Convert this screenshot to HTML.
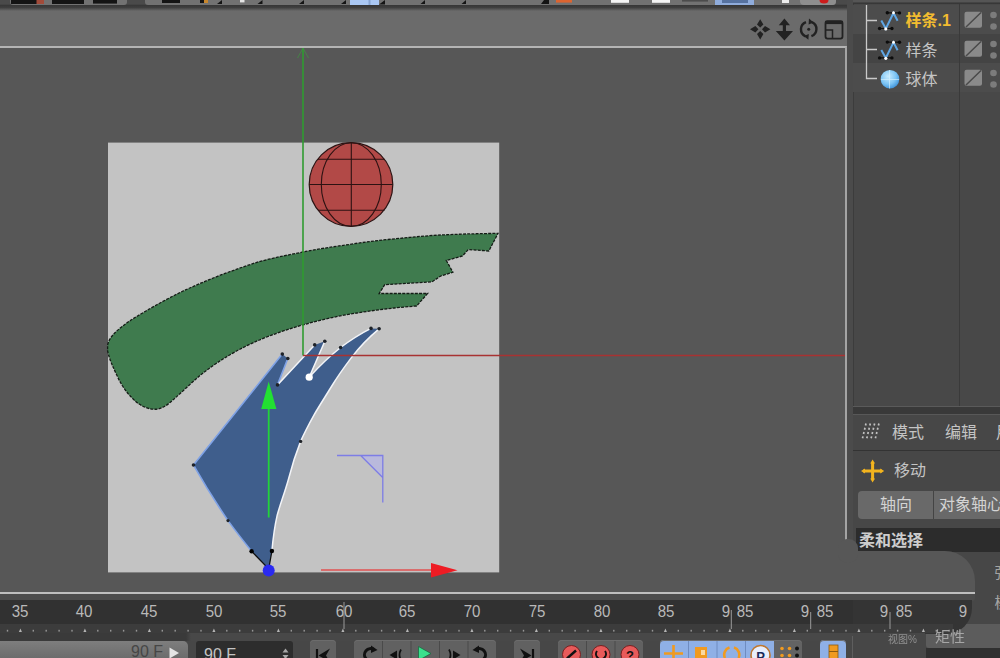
<!DOCTYPE html>
<html><head><meta charset="utf-8">
<style>
html,body{margin:0;padding:0;}
body{width:1000px;height:658px;overflow:hidden;position:relative;background:#474747;font-family:"Liberation Sans","Noto Sans CJK SC",sans-serif;}
.abs{position:absolute;}
#topstrip{left:0;top:0;width:1000px;height:11px;background:linear-gradient(#4a4a4a 0,#4a4a4a 4px,#383838 5.5px,#3f3f3f 7.5px,#585858 9.5px,#6b6b6b 11px);}
#vphead{left:0;top:11px;width:847px;height:35px;background:#6b6b6b;}
#vp{left:0;top:46px;width:845px;height:544px;background:#575757;border-top:2px solid #b4b4b4;border-right:2px solid #a4a4a4;border-bottom:2px solid #bebebe;box-sizing:content-box;}
#gutter{left:847px;top:0;width:6px;height:640px;background:#4b4b4b;}
#om{left:853px;top:4px;width:147px;height:403px;background:#484848;box-shadow:inset 1px 0 0 #3c3c3c;}
.row{position:absolute;left:0;width:147px;height:29px;}
.cn{position:absolute;font-size:16px;line-height:20px;color:#c4c4c4;white-space:nowrap;}
#gap{left:853px;top:407px;width:147px;height:8px;background:#393939;}
#am{left:853px;top:415px;width:147px;height:243px;background:#474747;}
.tl{position:absolute;top:602px;font-size:16px;line-height:20px;color:#b9b9b9;transform:translateX(-50%) scaleX(.94);white-space:nowrap;}
.btn{position:absolute;top:640px;height:20px;background:#616161;box-shadow:inset 0 1px 0 #6c6c6c;border-radius:4px 4px 0 0;}
</style></head><body>

<div id="topstrip" class="abs"></div>
<div id="vphead" class="abs"></div>
<div id="gutter" class="abs"></div>
<div id="vp" class="abs"></div>

<svg class="abs" style="left:0;top:0" width="1000" height="658" viewBox="0 0 1000 658">
  <!-- reference panel -->
  <rect x="108" y="142.6" width="391.2" height="429.8" fill="#c3c3c3"/>
  <!-- sphere -->
  <circle cx="351" cy="184.5" r="41.8" fill="#b24947" stroke="#2c1212" stroke-width="1.2"/>
  <g stroke="#2c1212" stroke-width="1.1" fill="none">
    <line x1="351.3" y1="142.7" x2="351.3" y2="226.3"/>
    <line x1="309.2" y1="184.5" x2="392.8" y2="184.5"/>
    <line x1="318" y1="159.3" x2="384.5" y2="159.3"/>
    <line x1="318" y1="210.3" x2="384.5" y2="210.3"/>
    <ellipse cx="351.3" cy="184.5" rx="30" ry="41.8"/>
  </g>
  <!-- green stroke -->
  <path d="M107.6 345 C109 339 112 336 115.2 332.5 C124 324 134 318 145.6 311.2 C157 304.5 170 297.5 182.1 291.5 C195 285.5 208 280 221.7 274.7 C235 269.8 248 265 261.2 261.1 C275 257.5 288 255 302 252.2 C318 249 334 246.6 350 244.4 C363 242.3 375 240.8 388 239.5 C403 238 417 236.6 432 235.5 C454 234.2 476 233.6 498 233.4 L488.8 251 L468.3 249.5 L462.4 256 L446.3 260.5 L452.9 272.2 L440.8 276 L432 281.8 L384.7 284.7 L379.2 293.5 L427.6 293.5 L416.6 306 C396 307.5 375 310 355 313.3 C337 316 319 320.5 302.3 325 C291 328.2 280 332 270.3 335.6 C258 340.3 247 345.3 236.9 350.8 C223 358.5 211 366.5 200.4 375.1 C190 384 180 394 170 402.5 C164 407.5 159 409.6 153.2 409.2 C146 408.5 139 405 133.5 399.4 C126 392 121.5 385 118.2 378.1 C113.5 368 109.5 360 107.6 350.8 Z" fill="#3f7b4e" stroke="#141c16" stroke-width="1.3" stroke-dasharray="3 1.2"/>
  <!-- blue shape -->
  <path id="bl" d="M268.7 569 L251.8 551.4 Q238.5 535 228 520.6 Q210 494 193.4 464.8 L282.3 354.1 L287.8 358.5 L277.5 384.9 L314.7 344.9 L324.8 341.3 L309.2 377.2 Q325 360 340.6 347.5 Q356 336 371 328.4 L379.1 328.8 C368 338 359 347.5 351.6 357.4 C344 367.5 337.5 376.5 331.8 386 C325 397 319.5 405.5 314.2 414.6 C309 424 304.5 432.5 300.6 441.4 C296 453 292 465.5 288.6 478.8 C285 492 280.5 503 277.2 515.2 C274.5 527 273 539 271.9 551 Q270.3 560 268.7 569 Z" fill="#3f5e8c"/>
  <path d="M193.5 465 L282.3 354.1 M287.8 358.5 L277.5 384.9 M193.4 464.8 Q210 494 228 520.6 Q238.5 535 251.8 551.4" stroke="#7fa2e6" stroke-width="1.6" fill="none"/>
  <path d="M277.5 384.9 L314.7 344.9 M324.8 341.3 L309.2 377.2 Q325 360 340.6 347.5 Q356 336 371 328.4 M379.1 328.8 C368 338 359 347.5 351.6 357.4 C344 367.5 337.5 376.5 331.8 386 C325 397 319.5 405.5 314.2 414.6 C309 424 304.5 432.5 300.6 441.4 C296 453 292 465.5 288.6 478.8 C285 492 280.5 503 277.2 515.2 C274.5 527 273 539 271.9 551" stroke="#f2f4f8" stroke-width="1.5" fill="none"/>
  <path d="M251.6 551.3 L268.7 569 L271.9 551" stroke="#111" stroke-width="1.3" fill="none"/>
  <g fill="#1e2228">
    <circle cx="282.3" cy="354.1" r="1.8"/><circle cx="287.8" cy="358.5" r="1.8"/><circle cx="277.5" cy="384.9" r="1.8"/>
    <circle cx="314.7" cy="344.9" r="1.8"/><circle cx="324.8" cy="341.3" r="1.8"/><circle cx="340.6" cy="347.5" r="1.8"/>
    <circle cx="371" cy="328.4" r="1.8"/><circle cx="379.1" cy="328.8" r="1.8"/><circle cx="300.6" cy="441.4" r="1.7"/>
    <circle cx="193.5" cy="465" r="1.8"/><circle cx="228" cy="520.6" r="1.6"/>
    <circle cx="251.6" cy="551.3" r="2.2" fill="#000"/><circle cx="271.9" cy="551" r="2.2" fill="#000"/>
  </g>
  <circle cx="309.2" cy="377.2" r="3.6" fill="#fff"/>
  <!-- world axes -->
  <line x1="303" y1="48" x2="303" y2="355.5" stroke="#2f9b30" stroke-width="1.6"/>
  <path d="M297.5 58 L303 48 L308.5 58" stroke="#3f9440" stroke-width="1" fill="none" opacity=".7"/>
  <line x1="303" y1="355.5" x2="845" y2="355.5" stroke="#a83232" stroke-width="1.4"/>
  <!-- object axes -->
  <line x1="268.7" y1="405" x2="268.7" y2="517.5" stroke="#22d43a" stroke-width="1.8"/>
  <path d="M268.7 381.6 L276.4 409 L261.2 409 Z" fill="#22e032"/>
  <line x1="321" y1="570" x2="432" y2="570" stroke="#e05050" stroke-width="1.6"/>
  <path d="M457.5 570.3 L431 563 L431 577.5 Z" fill="#ee1c24"/>
  <circle cx="268.7" cy="570.4" r="6" fill="#2a2af0"/>
  <!-- purple corner -->
  <path d="M360.7 455.5 L382.7 455.5 L382.7 477.5 Z" fill="#b9b9dc"/>
  <path d="M337 455.5 L382.8 455.5 L382.8 502.5 M360.7 455.5 L382.7 477.5" stroke="#7d7de6" stroke-width="1.3" fill="none"/>
  <!-- viewport icons -->
  <g fill="#222">
    <path d="M760.2 19.2 L763.4 24.6 L760.2 27.6 L757 24.6 Z M760.2 39.4 L763.4 34 L760.2 31 L757 34 Z M750 29.3 L755.4 26.1 L758.4 29.3 L755.4 32.5 Z M770.4 29.3 L765 26.1 L762 29.3 L765 32.5 Z"/>
    <path d="M784.4 18.5 L790 25.2 L786 25.2 L786 31 L793 31 L784.4 40.5 L775.8 31 L782.8 31 L782.8 25.2 L778.8 25.2 Z"/>
    <circle cx="808.7" cy="29.2" r="1.5"/>
  </g>
  <g stroke="#222" fill="none">
    <path d="M805.5 36.3 A7.6 7.6 0 0 1 806 22.2" stroke-width="2.4"/>
    <path d="M811.9 22.1 A7.6 7.6 0 0 1 811.4 36.2" stroke-width="2.4"/>
    <path d="M809 18.6 L813.6 22.4 L808.6 24.4 Z" fill="#222" stroke="none"/>
    <path d="M808.4 39.8 L803.8 36 L808.8 34 Z" fill="#222" stroke="none"/>
    <rect x="825.5" y="21.2" width="17" height="17.4" rx="2" stroke-width="1.8"/>
    <path d="M825 22.5 L843 22.5" stroke-width="3.2"/>
    <path d="M826 30 L832.5 30 L832.5 38.5" stroke-width="1.5"/>
  </g>
</svg>


<!-- top toolbar remnants -->
<svg class="abs" style="left:0;top:0" width="1000" height="6" viewBox="0 0 1000 6">
  <rect x="10" y="-4" width="117" height="9" rx="3" fill="#727272"/>
  <rect x="145" y="-4" width="691" height="9" rx="3" fill="#727272"/>
  <g fill="#141414">
    <rect x="11" y="0" width="26" height="4"/><rect x="52" y="0" width="32" height="4"/><rect x="93" y="0" width="24" height="3.6"/>
    <rect x="162" y="0" width="18" height="3"/><rect x="200" y="0" width="8" height="3"/>
    <path d="M222 0 V4 H217 Z M262.5 0 V4 H257.5 Z M304 0 V4 H299 Z M346 0 V4 H341 Z M385 0 V4.4 H379 Z M425 0 V4 H420.5 Z M466 0 V4 H461.5 Z M549 0 V4 H541 L544 0 Z M80 0 L84 0 L84 4 Z"/>
  </g>
  <rect x="36.5" y="0" width="7.5" height="4" fill="#a24b3a"/>
  <rect x="204" y="0" width="4" height="3" fill="#c8862c"/>
  <rect x="240" y="0" width="4.5" height="2.4" fill="#e4e4e4"/>
  <rect x="350" y="0" width="29" height="5" fill="#aac8f4"/><rect x="368.5" y="0" width="2" height="5" fill="#86a3d2"/>
  <rect x="556" y="0" width="16" height="2.6" fill="#dc6430"/>
  <rect x="611" y="0" width="18" height="2.8" fill="#f4f4f4"/><rect x="652" y="0" width="18" height="2.8" fill="#f4f4f4"/>
  <rect x="682" y="0" width="26" height="1.6" fill="#4c4c4c"/>
  <rect x="715" y="0" width="39" height="5" fill="#8facdc"/><rect x="722" y="0" width="26" height="3" fill="#5672a0"/>
  <rect x="782" y="0" width="7" height="3" fill="#ececec"/>
  <rect x="800" y="-4" width="36" height="9" rx="4" fill="#8e8e8e"/>
  <path d="M819.5 0 A4.5 3.6 0 0 0 828.5 0 Z" fill="#cc1c1c"/>
</svg>

<!-- object manager -->
<div id="om" class="abs">
  <div class="row" style="top:1px;background:#4c4c4c"></div>
  <div class="row" style="top:30px;background:#444"></div>
  <div class="row" style="top:59px;background:#4c4c4c"></div>
  <div class="abs" style="left:106px;top:0;width:1px;height:403px;background:#3a3a3a"></div>
  <svg class="abs" style="left:0;top:0" width="147" height="100" viewBox="853 4 147 100">
    <path d="M866.5 5 L866.5 78.5 L877 78.5 M866.5 20.5 L877 20.5 M866.5 49.5 L877 49.5" stroke="#c9c9c9" stroke-width="1.3" fill="none"/>
    <g id="spl">
      <path d="M881.3 20.5 L885.8 28.6 L893.5 13 L897.6 20.8" stroke="#5fa6e4" stroke-width="2" fill="none" stroke-linejoin="miter"/>
      <path d="M879.5 28.5 L892 28.5 M887.2 12.8 L899.6 12.8" stroke="#111" stroke-width="1.2"/>
      <g fill="#0c0c0c"><circle cx="879.6" cy="28.5" r="1.7"/><circle cx="891.9" cy="28.5" r="1.7"/><circle cx="887.3" cy="12.7" r="1.7"/><circle cx="899.5" cy="12.9" r="1.7"/></g>
      <circle cx="885.8" cy="28.9" r="1.6" fill="#fff"/><circle cx="893.5" cy="12.8" r="1.5" fill="#fff"/>
    </g>
    <use href="#spl" y="29.4"/>
    <defs><radialGradient id="sg" cx=".4" cy=".35" r=".7"><stop offset="0" stop-color="#c8ecff"/><stop offset=".6" stop-color="#7cc4f4"/><stop offset="1" stop-color="#3a8fd8"/></radialGradient></defs>
    <circle cx="890" cy="79.2" r="9.3" fill="url(#sg)"/>
    <path d="M881 79.5 L899 79.5 M889.5 70 L889.5 88.5" stroke="#d8f2ff" stroke-width=".8" opacity=".8"/>
    <g fill="#8a8a8a">
      <rect x="964.5" y="11.7" width="17.5" height="16" rx="2"/><rect x="964.5" y="40.7" width="17.5" height="16" rx="2"/><rect x="964.5" y="69.7" width="17.5" height="16" rx="2"/>
    </g>
    <g stroke="#4a4a4a" stroke-width="1.5"><path d="M966 27 L981 12.5 M966 56 L981 41.5 M966 85 L981 70.5"/></g>
    <g fill="#7c7c7c"><circle cx="993.5" cy="15" r="3.3"/><circle cx="993.5" cy="26.5" r="3.3"/><circle cx="993.5" cy="44" r="3.3"/><circle cx="993.5" cy="55.5" r="3.3"/><circle cx="993.5" cy="73" r="3.3"/><circle cx="993.5" cy="84.5" r="3.3"/></g>
  </svg>
  <div class="cn" style="left:52.5px;top:7px;color:#f2bc30;font-weight:700">样条.1</div>
  <div class="cn" style="left:52.5px;top:36.5px">样条</div>
  <div class="cn" style="left:52.5px;top:65.5px">球体</div>
</div>
<div class="abs" style="left:853px;top:0;width:147px;height:4px;background:linear-gradient(#555 0,#555 2px,#333 3px,#3c3c3c 4px)"></div>
<div id="gap" class="abs"></div>
<div class="abs" style="left:853px;top:406px;width:147px;height:1px;background:#5a5a5a"></div>
<div class="abs" style="left:853px;top:414px;width:147px;height:1px;background:#585858"></div>

<!-- attribute manager -->
<div id="am" class="abs">
  <div class="abs" style="left:0;top:35px;width:147px;height:1px;background:#333"></div>
  <svg class="abs" style="left:0;top:0" width="147" height="80" viewBox="853 415 147 80">
    <g stroke="#c2c2c2" stroke-width="1.7" stroke-dasharray="2 2.4">
      <path d="M866 423.5 L862 440.5 M870.3 423.5 L866.3 440.5 M874.6 423.5 L870.6 440.5 M878.9 423.5 L874.9 440.5"/>
    </g>
    <g stroke="#f3b41e" stroke-width="3" fill="#f3b41e">
      <path d="M872.6 462 L872.6 480 M863 471 L882 471"/>
      <path d="M872.6 459.5 L875 463.5 L870.2 463.5 Z M872.6 482.5 L875 478.5 L870.2 478.5 Z M861 471 L865 468.6 L865 473.4 Z M884.2 471 L880.2 468.6 L880.2 473.4 Z" stroke="none"/>
    </g>
  </svg>
  <div class="cn" style="left:39px;top:8px">模式</div>
  <div class="cn" style="left:92px;top:8px">编辑</div>
  <div class="cn" style="left:143px;top:8px">用户</div>
  <div class="cn" style="left:41px;top:46px">移动</div>
  <div class="abs" style="left:5px;top:76px;width:75px;height:28px;background:#696969;border-radius:4px 0 0 4px;border-right:1px solid #444"></div>
  <div class="abs" style="left:81px;top:76px;width:70px;height:28px;background:#696969"></div>
  <div class="cn" style="left:27px;top:80px;color:#d4d4d4">轴向</div>
  <div class="cn" style="left:86px;top:80px;color:#d4d4d4">对象轴心</div>
  <div class="abs" style="left:3px;top:113px;width:144px;height:24px;background:#2c2c2c"></div>
  <div class="cn" style="left:6px;top:116px;color:#cdcdcd;font-weight:700">柔和选择</div>
  <div class="cn" style="left:141.5px;top:148px;font-size:15px;color:#a4a4a4">强度</div>
  <div class="cn" style="left:141.5px;top:178px;font-size:15px;color:#a4a4a4">模式</div>
</div>

<!-- bottom strip under viewport -->
<div class="abs" style="left:0;top:594px;width:853px;height:7px;background:#4c4c4c"></div>
<div class="abs" id="tlband" style="left:0;top:600px;width:853px;height:33px;background:#313131"></div>
<div class="abs" style="left:0;top:633px;width:853px;height:8px;background:#484848"></div>
<div class="abs" style="left:0;top:633px;width:191px;height:8px;background:linear-gradient(90deg,#3a3a3a 0,#3a3a3a 186px,#484848 191px)"></div>
<div class="abs" style="left:0;top:641px;width:853px;height:17px;background:#474747"></div>


<!-- cloned patch bottom-right -->
<div class="abs" style="left:926px;top:648px;width:74px;height:10px;background:#303030"></div>
<div class="abs" style="left:926px;top:624px;width:74px;height:24px;background:#5c5c5c;border-radius:3px 0 0 3px"></div>
<div class="abs" style="left:840px;top:551px;width:135px;height:41px;background:#575757;border-radius:6px 30px 0 0"></div>
<div class="abs" style="left:838px;top:539px;width:20px;height:24px;background:#575757;border-radius:9px"></div>
<div class="abs" style="left:845px;top:592px;width:130px;height:2px;background:#bebebe"></div>
<div class="abs" style="left:853px;top:594px;width:122px;height:7px;background:#4c4c4c;border-radius:0 0 3px 0"></div>
<div class="abs" style="left:853px;top:600px;width:119px;height:34px;background:#343434;border-radius:0 0 26px 0"></div>
<div class="abs" style="left:853px;top:624px;width:100px;height:9px;background:#3c3c3c"></div>
<div class="abs" style="left:853px;top:633px;width:72px;height:25px;background:#474747"></div>
<div class="abs" style="left:888px;top:632.5px;font-size:10px;line-height:14px;color:#909090;white-space:nowrap;font-family:'Liberation Sans','Noto Sans CJK SC',sans-serif;filter:blur(.6px)">视图%</div>
<div class="abs" style="left:935px;top:626.5px;font-size:15px;line-height:20px;color:#a6a6a6;white-space:nowrap;font-family:'Liberation Sans','Noto Sans CJK SC',sans-serif;filter:blur(.7px)">矩性</div>

<!-- timeline -->
<div class="abs" style="left:0;top:624px;width:853px;height:9px;background:#3c3c3c"></div>
<div class="tl" style="left:20px">35</div>
<div class="tl" style="left:84px">40</div>
<div class="tl" style="left:149px">45</div>
<div class="tl" style="left:213.5px">50</div>
<div class="tl" style="left:278px">55</div>
<div class="tl" style="left:344px">60</div>
<div class="tl" style="left:407px">65</div>
<div class="tl" style="left:472px">70</div>
<div class="tl" style="left:537px">75</div>
<div class="tl" style="left:601.5px">80</div>
<div class="tl" style="left:666px">85</div>
<div class="tl" style="left:726px">9</div>
<div class="tl" style="left:744.5px">85</div>
<div class="tl" style="left:805px">9</div>
<div class="tl" style="left:824.5px">85</div>
<div class="tl" style="left:884px">9</div>
<div class="tl" style="left:903.5px">85</div>
<div class="tl" style="left:963px">9</div>
<svg class="abs" style="left:0;top:596px" width="1000" height="62" viewBox="0 596 1000 62"><g fill="#b4b4b4"><rect x="6.8" y="629.8" width="1.4" height="1.8" opacity=".75"/><path d="M20.4 628.4 L21.9 632 L18.9 632 Z"/><rect x="32.6" y="629.8" width="1.4" height="1.8" opacity=".75"/><rect x="45.5" y="629.8" width="1.4" height="1.8" opacity=".75"/><rect x="58.4" y="629.8" width="1.4" height="1.8" opacity=".75"/><rect x="71.3" y="629.8" width="1.4" height="1.8" opacity=".75"/><path d="M84.9 628.4 L86.4 632 L83.4 632 Z"/><rect x="97.1" y="629.8" width="1.4" height="1.8" opacity=".75"/><rect x="110.0" y="629.8" width="1.4" height="1.8" opacity=".75"/><rect x="122.9" y="629.8" width="1.4" height="1.8" opacity=".75"/><rect x="135.8" y="629.8" width="1.4" height="1.8" opacity=".75"/><path d="M149.4 628.4 L150.9 632 L147.9 632 Z"/><rect x="161.6" y="629.8" width="1.4" height="1.8" opacity=".75"/><rect x="174.5" y="629.8" width="1.4" height="1.8" opacity=".75"/><rect x="187.4" y="629.8" width="1.4" height="1.8" opacity=".75"/><rect x="200.3" y="629.8" width="1.4" height="1.8" opacity=".75"/><path d="M213.9 628.4 L215.4 632 L212.4 632 Z"/><rect x="226.1" y="629.8" width="1.4" height="1.8" opacity=".75"/><rect x="239.0" y="629.8" width="1.4" height="1.8" opacity=".75"/><rect x="251.9" y="629.8" width="1.4" height="1.8" opacity=".75"/><rect x="264.8" y="629.8" width="1.4" height="1.8" opacity=".75"/><path d="M278.4 628.4 L279.9 632 L276.9 632 Z"/><rect x="290.6" y="629.8" width="1.4" height="1.8" opacity=".75"/><rect x="303.5" y="629.8" width="1.4" height="1.8" opacity=".75"/><rect x="316.4" y="629.8" width="1.4" height="1.8" opacity=".75"/><rect x="329.3" y="629.8" width="1.4" height="1.8" opacity=".75"/><path d="M342.9 628.4 L344.4 632 L341.4 632 Z"/><rect x="355.1" y="629.8" width="1.4" height="1.8" opacity=".75"/><rect x="368.0" y="629.8" width="1.4" height="1.8" opacity=".75"/><rect x="380.9" y="629.8" width="1.4" height="1.8" opacity=".75"/><rect x="393.8" y="629.8" width="1.4" height="1.8" opacity=".75"/><path d="M407.4 628.4 L408.9 632 L405.9 632 Z"/><rect x="419.6" y="629.8" width="1.4" height="1.8" opacity=".75"/><rect x="432.5" y="629.8" width="1.4" height="1.8" opacity=".75"/><rect x="445.4" y="629.8" width="1.4" height="1.8" opacity=".75"/><rect x="458.3" y="629.8" width="1.4" height="1.8" opacity=".75"/><path d="M471.9 628.4 L473.4 632 L470.4 632 Z"/><rect x="484.1" y="629.8" width="1.4" height="1.8" opacity=".75"/><rect x="497.0" y="629.8" width="1.4" height="1.8" opacity=".75"/><rect x="509.9" y="629.8" width="1.4" height="1.8" opacity=".75"/><rect x="522.8" y="629.8" width="1.4" height="1.8" opacity=".75"/><path d="M536.4 628.4 L537.9 632 L534.9 632 Z"/><rect x="548.6" y="629.8" width="1.4" height="1.8" opacity=".75"/><rect x="561.5" y="629.8" width="1.4" height="1.8" opacity=".75"/><rect x="574.4" y="629.8" width="1.4" height="1.8" opacity=".75"/><rect x="587.3" y="629.8" width="1.4" height="1.8" opacity=".75"/><path d="M600.9 628.4 L602.4 632 L599.4 632 Z"/><rect x="613.1" y="629.8" width="1.4" height="1.8" opacity=".75"/><rect x="626.0" y="629.8" width="1.4" height="1.8" opacity=".75"/><rect x="638.9" y="629.8" width="1.4" height="1.8" opacity=".75"/><rect x="651.8" y="629.8" width="1.4" height="1.8" opacity=".75"/><path d="M665.4 628.4 L666.9 632 L663.9 632 Z"/><rect x="677.6" y="629.8" width="1.4" height="1.8" opacity=".75"/><rect x="690.5" y="629.8" width="1.4" height="1.8" opacity=".75"/><rect x="703.4" y="629.8" width="1.4" height="1.8" opacity=".75"/><rect x="716.3" y="629.8" width="1.4" height="1.8" opacity=".75"/><path d="M729.9 628.4 L731.4 632 L728.4 632 Z"/><rect x="742.1" y="629.8" width="1.4" height="1.8" opacity=".75"/><rect x="755.0" y="629.8" width="1.4" height="1.8" opacity=".75"/><rect x="767.9" y="629.8" width="1.4" height="1.8" opacity=".75"/><rect x="780.8" y="629.8" width="1.4" height="1.8" opacity=".75"/><path d="M794.4 628.4 L795.9 632 L792.9 632 Z"/><rect x="806.6" y="629.8" width="1.4" height="1.8" opacity=".75"/><rect x="819.5" y="629.8" width="1.4" height="1.8" opacity=".75"/><rect x="832.4" y="629.8" width="1.4" height="1.8" opacity=".75"/><rect x="845.3" y="629.8" width="1.4" height="1.8" opacity=".75"/><path d="M858.9 628.4 L860.4 632 L857.4 632 Z"/><rect x="871.1" y="629.8" width="1.4" height="1.8" opacity=".75"/><rect x="884.0" y="629.8" width="1.4" height="1.8" opacity=".75"/><rect x="896.9" y="629.8" width="1.4" height="1.8" opacity=".75"/><rect x="909.8" y="629.8" width="1.4" height="1.8" opacity=".75"/><path d="M923.4 628.4 L924.9 632 L921.9 632 Z"/><rect x="935.6" y="629.8" width="1.4" height="1.8" opacity=".75"/><rect x="948.5" y="629.8" width="1.4" height="1.8" opacity=".75"/></g><path d="M344 602 L344 629 M731.3 610 L731.3 629 M810.7 612 L810.7 629 M890 612 L890 629" stroke="#9a9a9a" stroke-width="1"/></svg>


<!-- bottom controls -->
<div class="abs" style="left:0;top:641px;width:188px;height:17px;background:linear-gradient(#7e7e7e,#6c6c6c);border-radius:0 5px 0 0"></div>
<div class="abs" style="left:131px;top:642px;font-size:16px;line-height:20px;color:#464646;white-space:nowrap">90 F</div>
<div class="abs" style="left:196px;top:641px;width:97px;height:17px;background:#2d2d2d;border-radius:3px 3px 0 0"></div>
<div class="abs" style="left:204px;top:644.5px;font-size:16px;line-height:20px;color:#c4c4c4;white-space:nowrap">90 F</div>
<div class="btn" style="left:310px;width:26px"></div>
<div class="btn" style="left:354px;width:142px"></div>
<div class="btn" style="left:514px;width:26px"></div>
<div class="btn" style="left:558px;width:85px"></div>
<div class="btn" style="left:660px;width:114px;background:#8fb0e6;border-radius:4px 0 0 0"></div>
<div class="btn" style="left:774px;width:28px;border-radius:0 4px 0 0;background:#636363"></div>
<div class="btn" style="left:820px;width:26px;background:#8fb0e6"></div>
<svg class="abs" style="left:0;top:636px" width="1000" height="22" viewBox="0 636 1000 22">
  <g stroke="#4a4a4a" stroke-width="1"><path d="M382.5 641 V658 M411 641 V658 M439.5 641 V658 M468 641 V658 M586.5 641 V658 M615 641 V658"/></g>
  <g stroke="#6f8cc0" stroke-width="1"><path d="M688.5 641 V658 M717 641 V658 M745.5 641 V658"/></g>
  <path d="M169.5 647.5 L179 653 L169.5 658.5 Z" fill="#e4e4e4"/>
  <path d="M285.5 648.5 L288.5 652.5 L282.5 652.5 Z M285.5 659 L288.5 655 L282.5 655 Z" fill="#a8a8a8"/>
  <g fill="#111" stroke="#111">
    <path d="M317 649 V661" stroke-width="2.2"/><path d="M318.5 655.5 L330 648.5 L326 655.5 L330 662 Z" stroke="none"/>
    <path d="M533 649 V661" stroke-width="2.2"/><path d="M531.5 655.5 L520 648.5 L524 655.5 L520 662 Z" stroke="none"/>
    <path d="M374 649.5 A6.2 6.2 0 1 0 374 660" fill="none" stroke-width="3"/><path d="M371 645.5 L377.5 650 L371 653 Z" stroke="none"/>
    <path d="M476 649.5 A6.2 6.2 0 1 1 476 660" fill="none" stroke-width="3"/><path d="M479 645.5 L472.5 650 L479 653 Z" stroke="none"/>
    <path d="M389.5 655 L397 650.5 V659.5 Z" stroke="none"/><path d="M401 649.5 Q398 655 401 660" fill="none" stroke-width="1.7"/>
    <path d="M460.5 655 L453 650.5 V659.5 Z" stroke="none"/><path d="M449 649.5 Q452 655 449 660" fill="none" stroke-width="1.7"/>
  </g>
  <path d="M418.5 646.5 L431 653.5 L418.5 660.5 Z" fill="#3ae08c" stroke="#1a6a40" stroke-width=".8"/>
  <g fill="#e85a5a" stroke="#7a2020" stroke-width="1"><circle cx="571.5" cy="654.5" r="9"/><circle cx="601" cy="654.5" r="9"/><circle cx="630" cy="654.5" r="9"/></g>
  <path d="M567 658.5 L576 650.5" stroke="#111" stroke-width="2.4"/>
  <path d="M597 651 A5 5 0 1 0 605 651" stroke="#111" stroke-width="2" fill="none"/>
  <text x="630" y="660" font-size="13" font-weight="700" text-anchor="middle" fill="#111" font-family="Liberation Sans, sans-serif">?</text>
  <g stroke="#f09a20" stroke-width="2.6" fill="none"><path d="M673.5 645 V660 M664 653.5 H683"/></g>
  <rect x="695" y="647" width="12" height="12" fill="#f09a20"/><rect x="701" y="650" width="4" height="5" fill="#fbd9a0"/>
  <path d="M725 658 A7.5 7.5 0 0 1 729.5 647.5 M734 647.5 A7.5 7.5 0 0 1 738.5 658" stroke="#f09a20" stroke-width="2.6" fill="none"/>
  <circle cx="760.5" cy="655" r="9.5" fill="#e8eefc" stroke="#c07830" stroke-width="1.6"/>
  <text x="760.5" y="660.5" font-size="13" font-weight="700" text-anchor="middle" fill="#1a2a5a" font-family="Liberation Sans, sans-serif">P</text>
  <g fill="#f09a20"><circle cx="782" cy="648.5" r="1.8"/><circle cx="789.5" cy="648.5" r="1.8"/><circle cx="782" cy="655.5" r="1.8"/><circle cx="789.5" cy="655.5" r="1.8"/></g>
  <g fill="#111"><circle cx="797" cy="648.5" r="2"/><circle cx="797" cy="655.5" r="2"/></g>
  <rect x="829" y="645" width="9" height="14" fill="#f09a20" stroke="#8a5a10" stroke-width=".8"/><path d="M829 651.5 H838" stroke="#8a5a10" stroke-width="1"/>
  <path d="M852.5 636 V658" stroke="#5e5e5e" stroke-width="1"/>
</svg>

</body></html>
